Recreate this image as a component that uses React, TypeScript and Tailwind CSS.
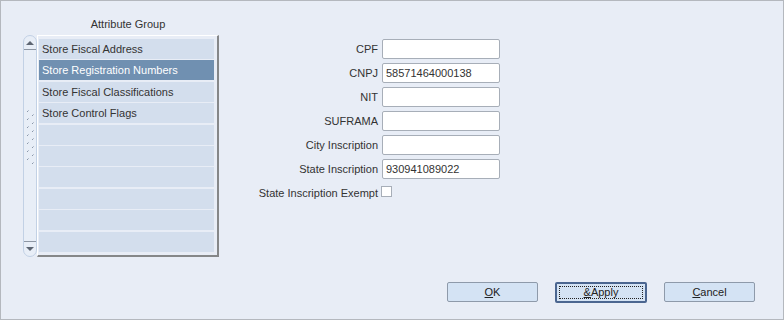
import React from 'react'

const groups = [
  'Store Fiscal Address',
  'Store Registration Numbers',
  'Store Fiscal Classifications',
  'Store Control Flags',
  '',
  '',
  '',
  '',
  '',
  '',
]

const fields = [
  { label: 'CPF', value: '' },
  { label: 'CNPJ', value: '58571464000138' },
  { label: 'NIT', value: '' },
  { label: 'SUFRAMA', value: '' },
  { label: 'City Inscription', value: '' },
  { label: 'State Inscription', value: '930941089022' },
]

function Grip() {
  // the little dotted grip on the scroll bar
  const marks = []
  for (let i = 0; i < 7; i++) {
    const y = i * 8
    marks.push(<rect key={'a' + i} x="1" y={y + 1} width="1" height="1" fill="#8a96a8" />)
    marks.push(<rect key={'a2' + i} x="2" y={y} width="1" height="1" fill="#b4bfcf" />)
    marks.push(<rect key={'b' + i} x="6" y={y + 5} width="1" height="1" fill="#8a96a8" />)
    marks.push(<rect key={'b2' + i} x="7" y={y + 4} width="1" height="1" fill="#b4bfcf" />)
  }
  return (
    <svg width="9" height="58" viewBox="0 0 9 58">
      {marks}
    </svg>
  )
}

function ScrollBar() {
  return (
    <div className="w-[14px] h-[222px] flex flex-col border border-[#c2d1e5] rounded-t-[7px] rounded-b-[7px] bg-[#e8eef7]">
      <div className="h-[13px] flex items-center justify-center border-b border-[#8d96a3] mt-[1px]">
        <div className="w-0 h-0 border-l-[4px] border-r-[4px] border-b-[4px] border-l-transparent border-r-transparent border-b-[#5e6673]" />
      </div>
      <div className="flex-1 flex items-center justify-center pb-[14px]">
        <Grip />
      </div>
      <div className="h-[14px] flex items-center justify-center border-t border-[#8d96a3] mb-[1px]">
        <div className="w-0 h-0 border-l-[4px] border-r-[4px] border-t-[4px] border-l-transparent border-r-transparent border-t-[#5e6673]" />
      </div>
    </div>
  )
}

export default function App() {
  return (
    <div
      className="w-[784px] h-[320px] flex flex-col bg-[#e8edf6] border border-[#b4b8be] text-[11px] text-[#333]"
      style={{ fontFamily: '"Liberation Sans", Arial, sans-serif' }}
    >
      <div className="flex pt-[17px]">
        <div className="ml-[22px] flex flex-col">
          <div className="h-[17px] text-center pl-[14px] leading-[13px]">Attribute Group</div>
          <div className="flex">
            <ScrollBar />
            <div className="w-[182px] h-[222px] border-t border-l border-t-white border-l-white border-r-2 border-b-2 border-r-[#858789] border-b-[#858789] pl-[1px] pr-[3px] pt-[3px] flex flex-col gap-[1.4px]">
              {groups.map((g, i) => (
                <div
                  key={i}
                  className={`h-[20px] leading-[20px] pl-[3px] whitespace-nowrap ${i === 1 ? 'bg-[#7090b1] text-white' : 'bg-[#d3deed] text-[#333]'}`}
                >
                  {g}
                </div>
              ))}
            </div>
          </div>
        </div>

        <div className="ml-[33px] pt-[21px] flex flex-col gap-[4px]">
          {fields.map((f) => (
            <div key={f.label} className="flex items-center h-[20px]">
              <div className="w-[130px] text-right pr-[4px]">{f.label}</div>
              <div className="w-[118px] h-[20px] bg-white border border-[#a7aeb8] rounded-[2px] px-[3px] leading-[18px] text-[#333]">
                {f.value}
              </div>
            </div>
          ))}
          <div className="flex items-center h-[20px]">
            <div className="w-[130px] text-right pr-[4px]">State Inscription Exempt</div>
            <div className="w-[11px] h-[11px] bg-white border border-[#a7aeb8] mt-[-3px] ml-[-1px]" />
          </div>
        </div>
      </div>

      <div className="flex-1" />

      <div className="flex justify-end gap-[17px] pr-[28px] pb-[16px]">
        <button className="w-[91px] h-[20px] bg-[#d4e3f4] border border-[#8e9aaa] rounded-[2px] text-[#222]">
          <span className="underline">O</span>K
        </button>
        <button className="w-[92px] h-[21px] bg-[#d4e3f4] border-2 border-[#4b6690] rounded-[2px] text-[#222] outline-1 outline-dotted outline-[#222] outline-offset-[-5px]">
          <span className="underline">&amp;</span>Apply
        </button>
        <button className="w-[91px] h-[20px] bg-[#d4e3f4] border border-[#8e9aaa] rounded-[2px] text-[#222]">
          <span className="underline">C</span>ancel
        </button>
      </div>
    </div>
  )
}
